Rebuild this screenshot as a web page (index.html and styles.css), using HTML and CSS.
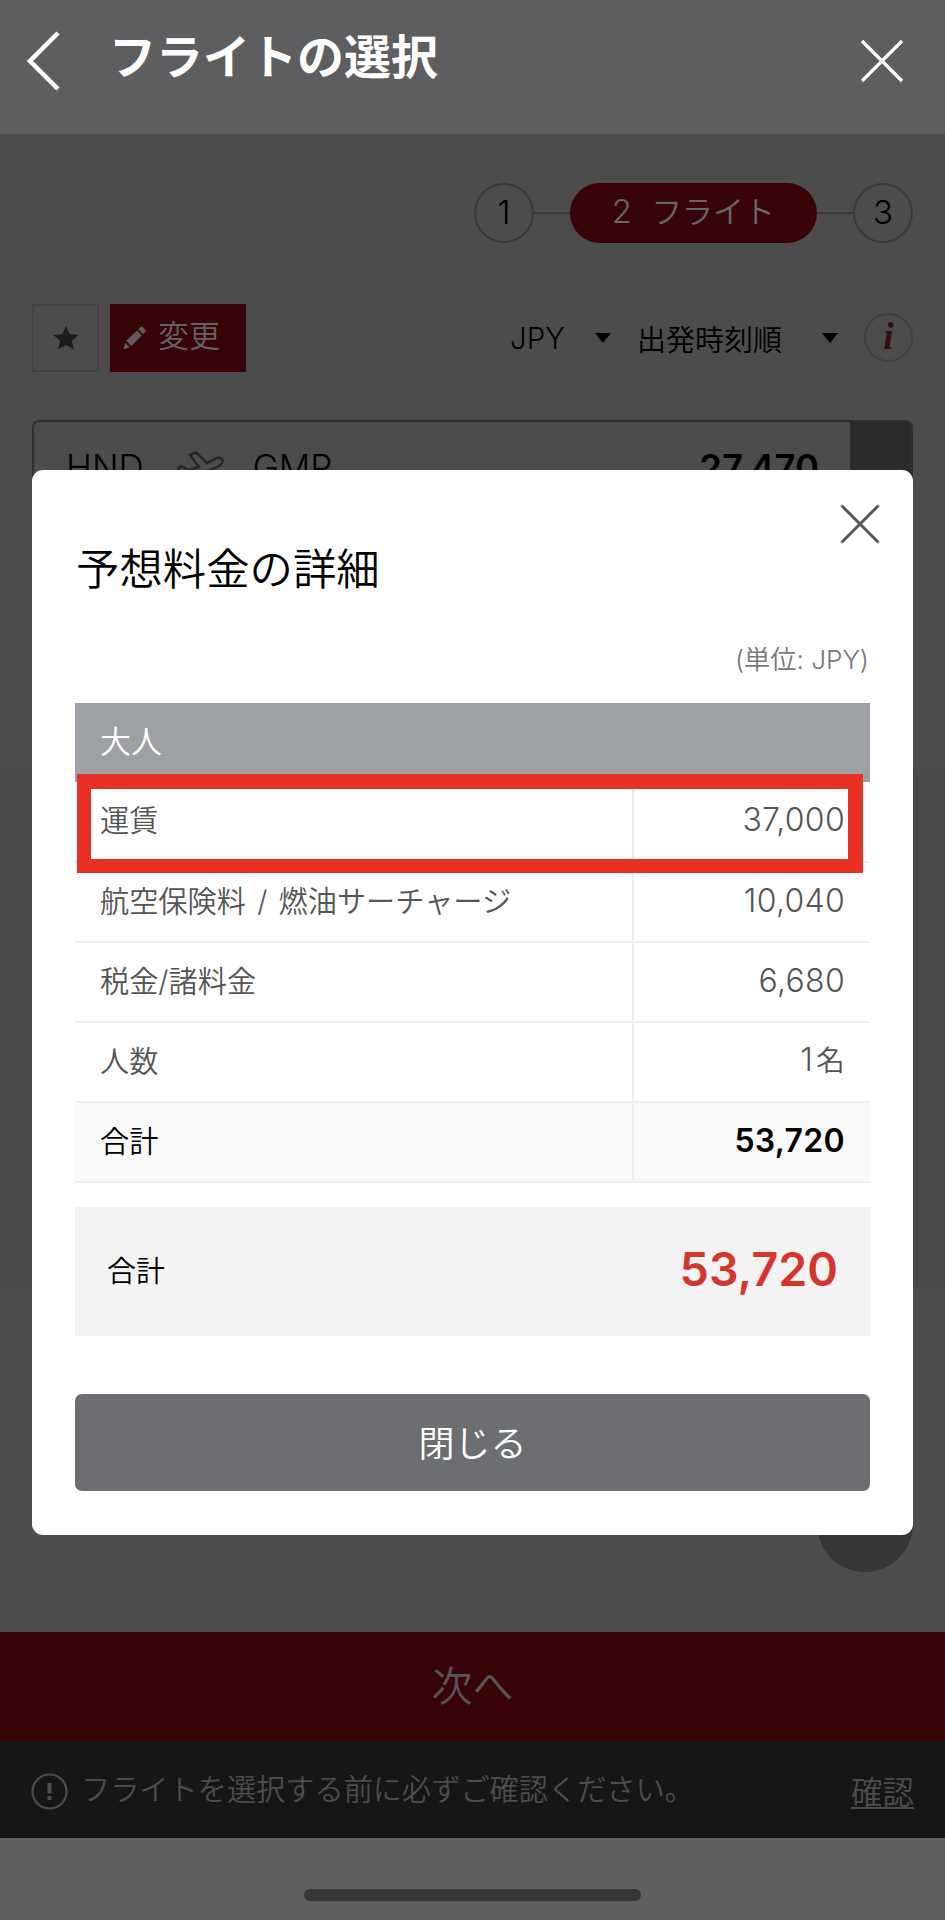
FILE: index.html
```html
<!DOCTYPE html>
<html lang="ja">

<head>
    <meta charset="UTF-8">
    <meta name="viewport" content="width=device-width, initial-scale=1.0">
    <title>フライトの選択</title>
    <link rel="stylesheet" href="styles.css">
</head>

<body>
    <header class="header">
        <svg class="back" width="34" height="62" viewBox="0 0 34 62">
            <path d="M31 3 L3 31 L31 59" />
        </svg>
        <h1>フライトの選択</h1>
        <svg class="close" width="44" height="44" viewBox="0 0 44 44">
            <path d="M2 2 L42 42 M42 2 L2 42" />
        </svg>
    </header>

    <main class="main">
        <div class="steps">
            <span class="step">1</span>
            <span class="line"></span>
            <span class="step on"><b>2</b>フライト</span>
            <span class="line"></span>
            <span class="step">3</span>
        </div>

        <div class="tools">
            <button class="fav">
                <svg width="26" height="24" viewBox="0 0 26 24">
                    <path d="M13 0 L16.600 8.100 L25.500 9 L18.900 14.800 L20.800 23.500 L13 19 L5.200 23.500 L7.100 14.800 L0.500 9 L9.400 8.100 Z" />
                </svg>
            </button>
            <button class="change">
                <svg width="24" height="24" viewBox="0 0 24 24">
                    <path d="M3.200 14.800 L14 4.500 L18.800 9.500 L8.200 20 Z M15.200 3.200 L17.800 0.800 Q18.600 0 19.500 0.800 L22.600 4 Q23.300 5 22.600 5.800 L20 8.300 Z M2 16.500 L6.800 21.300 L0.500 23.500 Z" />
                </svg>
                <span>変更</span>
            </button>
            <div class="sort">
                <span class="jpy">JPY</span>
                <i class="arrow"></i>
                <span class="order">出発時刻順</span>
                <i class="arrow"></i>
                <span class="info">i</span>
            </div>
        </div>

        <div class="flight">
            <span class="code">HND</span>
            <svg class="plane" width="48" height="36" viewBox="0 0 48 36">
                <path d="M2 18 L5 15 L13 19 L23 16 L14 4 L20 1.500 L31 12 L41 7 Q47 6 46.500 10 Q46 14 41 16 L14 27 Q8 27 2 18 Z" />
            </svg>
            <span class="code">GMP</span>
            <span class="fare">27,470</span>
            <span class="side"></span>
        </div>
        <div class="shade"></div>
        <div class="fab"></div>
    </main>

    <div class="next">次へ</div>
    <div class="notice">
        <svg width="37" height="37" viewBox="0 0 37 37">
            <circle cx="18.500" cy="18.500" r="17" />
            <path d="M18.500 10 V20.500 M18.500 23 V27" />
        </svg>
        <p>フライトを選択する前に必ずご確認ください。</p>
        <a>確認</a>
    </div>
    <footer class="footer">
        <div class="handle"></div>
    </footer>

    <div class="modal">
        <svg class="modal-close" width="40" height="40" viewBox="0 0 40 40">
            <path d="M1.500 1.500 L38.500 38.500 M38.500 1.500 L1.500 38.500" />
        </svg>
        <h2>予想料金の詳細</h2>
        <p class="unit">(単位: JPY)</p>
        <table class="price">
            <colgroup>
                <col>
                <col class="col-num">
            </colgroup>
            <tr>
                <th colspan="2">大人</th>
            </tr>
            <tr>
                <td>運賃</td>
                <td class="num">37,000</td>
            </tr>
            <tr>
                <td>航空保険料 / 燃油サーチャージ</td>
                <td class="num">10,040</td>
            </tr>
            <tr>
                <td>税金/諸料金</td>
                <td class="num">6,680</td>
            </tr>
            <tr>
                <td>人数</td>
                <td class="num">1<small>名</small></td>
            </tr>
            <tr class="sum">
                <td>合計</td>
                <td class="num">53,720</td>
            </tr>
        </table>
        <div class="total">
            <span>合計</span>
            <strong>53,720</strong>
        </div>
        <button class="btn-close">閉じる</button>
        <div class="mark"></div>
    </div>
</body>

</html>
```

FILE: styles.css
```css
* {
    margin: 0;
    padding: 0;
    box-sizing: border-box;
}

body {
    position: relative;
    width: 945px;
    height: 1920px;
    overflow: hidden;
    background: #4c4c4c;
    color: #000;
    font-family: Inter, "Noto Sans CJK JP", sans-serif;
    font-weight: 350;
}

button {
    border: 0;
    font: inherit;
}

svg {
    display: block;
    flex: none;
}

/* 上部バー */
.header {
    display: flex;
    height: 134px;
    padding: 0 41px 0 27px;
    background: #5e5e60;
    color: #fff;
}

.header h1 {
    flex: 1;
    padding-left: 48px;
    font-size: 47px;
    line-height: 114px;
    font-weight: 700;
}

.back {
    margin-top: 30px;
    fill: none;
    stroke: #fff;
    stroke-width: 4.5;
}

.close {
    margin-top: 39px;
    fill: none;
    stroke: #fff;
    stroke-width: 3.2;
}

.main {
    position: relative;
    height: 1498px;
    padding: 49px 32px 0 32px;
}

/* ステップ */
.steps {
    display: flex;
    justify-content: flex-end;
    align-items: center;
}

.step {
    width: 60px;
    height: 60px;
    border: 2px solid #3a3a3a;
    border-radius: 30px;
    font-size: 33px;
    line-height: 54px;
    text-align: center;
}

.step.on {
    width: 247px;
    border: 0;
    background: #380407;
    color: #666;
    font-size: 31px;
    line-height: 57px;
}

.step.on b {
    margin-right: 19px;
    font-size: 33px;
    font-weight: 350;
}

.line {
    width: 36px;
    height: 2px;
    background: #3a3a3a;
}

.tools {
    display: flex;
    height: 68px;
    margin-top: 61px;
}

.fav {
    display: flex;
    justify-content: center;
    align-items: center;
    width: 67px;
    margin-right: 11px;
    border: 2px solid #424242;
    background: none;
}

.fav svg {
    fill: #1d1d1d;
}

.change {
    display: flex;
    align-items: center;
    width: 136px;
    padding-left: 13px;
    background: #380407;
    color: #626262;
    font-size: 31px;
    gap: 11px;
}

.change svg {
    fill: #5c5c5c;
}

.change span {
    margin-top: -9px;
}

.sort {
    display: flex;
    flex: 1;
    justify-content: flex-end;
    align-items: center;
    height: 67px;
    font-size: 29px;
}

.jpy {
    margin-right: 30px;
    font-size: 29.5px;
}

.arrow {
    border: 8px solid transparent;
    border-top: 10px solid #000;
    border-bottom: 0;
}

.order {
    margin: 0 40px 0 26px;
}

.info {
    width: 49px;
    height: 49px;
    margin-left: 26px;
    border: 2px solid #404040;
    border-radius: 50%;
    color: #350d10;
    font: italic bold 37px/44px "Liberation Serif", serif;
    text-align: center;
}

/* 便 */
.flight {
    display: flex;
    height: 110px;
    margin-top: 48px;
    padding-left: 32px;
    border: 2px solid #303030;
    border-radius: 7px;
    overflow: hidden;
}

.code {
    font-size: 35px;
    line-height: 91px;
}

.plane {
    margin: 29px 29px 0 32px;
    fill: none;
    stroke: #252525;
    stroke-width: 2.4;
}

.fare {
    margin: 0 31px 0 auto;
    font-size: 36.5px;
    line-height: 92px;
    font-weight: 600;
}

.side {
    width: 61px;
    background: #2b2b2b;
}

.shade {
    position: absolute;
    top: 635px;
    left: 0;
    width: 945px;
    height: 519px;
    background: #484848;
}

.fab {
    position: absolute;
    right: 32px;
    bottom: 60px;
    width: 96px;
    height: 96px;
    border-radius: 50%;
    background: #363636;
}

.next {
    height: 109px;
    background: #380407;
    color: #555;
    font-size: 41px;
    line-height: 109px;
    text-align: center;
}

.notice {
    display: flex;
    height: 97px;
    padding: 0 31px;
    background: #161616;
    color: #4c4c4c;
    font-size: 29.2px;
    line-height: 97px;
}

.notice svg {
    margin-top: 32px;
    fill: none;
    stroke: #4c4c4c;
    stroke-width: 2.2;
}

.notice svg path {
    stroke-width: 4;
}

.notice p {
    flex: 1;
    padding-left: 13px;
}

.notice a {
    font-size: 31.5px;
    line-height: 104px;
    text-decoration: underline;
    text-underline-offset: 3px;
    text-decoration-thickness: 2px;
}

.footer {
    height: 82px;
    padding-top: 51px;
    background: #5e5f61;
}

.handle {
    width: 337px;
    height: 12px;
    margin: 0 auto;
    border-radius: 6px;
    background: #363636;
}

/* 料金の詳細 */
.modal {
    position: absolute;
    top: 470px;
    left: 32px;
    width: 881px;
    height: 1065px;
    padding: 0 43px;
    border-radius: 11px;
    background: #fff;
}

.modal-close {
    position: absolute;
    top: 34px;
    right: 33px;
    fill: none;
    stroke: #58595b;
    stroke-width: 3;
}

.modal h2 {
    padding: 65px 0 0 1px;
    font-size: 43.4px;
    line-height: 68px;
    font-weight: 350;
}

.unit {
    height: 100px;
    padding: 38px 1px 0 0;
    color: #77787a;
    font-size: 26.2px;
    line-height: 37px;
    text-align: right;
}

.price {
    width: 795px;
    border-collapse: collapse;
    table-layout: fixed;
    color: #555;
    font-size: 29.2px;
    word-spacing: 3px;
}

.col-num {
    width: 237px;
}

.price th {
    height: 79px;
    padding: 0 25px 1px;
    background: #9da0a5;
    color: #fff;
    font-size: 31px;
    line-height: 40px;
    font-weight: 350;
    text-align: left;
}

.price td {
    height: 80px;
    padding: 0 25px 1px;
    border-bottom: 2px solid #eee;
    line-height: 40px;
}

.price .num {
    padding-bottom: 3px;
    border-left: 2px solid #eee;
    font-size: 32px;
    letter-spacing: 0.3px;
    text-align: right;
}

.num small {
    margin-left: 3px;
    font-size: 28.5px;
}

.sum td {
    background: #f9f9f9;
    color: #000;
}

.sum .num {
    font-weight: 600;
}

.total {
    display: flex;
    justify-content: space-between;
    align-items: center;
    height: 129px;
    margin-top: 24px;
    padding: 0 32px 5px;
    background: #f3f3f3;
    font-size: 29px;
}

.total strong {
    color: #d6352b;
    font-size: 46.6px;
    font-weight: 600;
}

.btn-close {
    display: block;
    width: 795px;
    height: 97px;
    margin-top: 58px;
    padding-bottom: 3px;
    border-radius: 7px;
    background: #6d6e71;
    color: #fff;
    font-size: 36px;
}

.mark {
    position: absolute;
    top: 304px;
    left: 45px;
    width: 786px;
    height: 99px;
    border: 15px solid #e83124;
    border-width: 15px 15px 14px 14px;
}
```
